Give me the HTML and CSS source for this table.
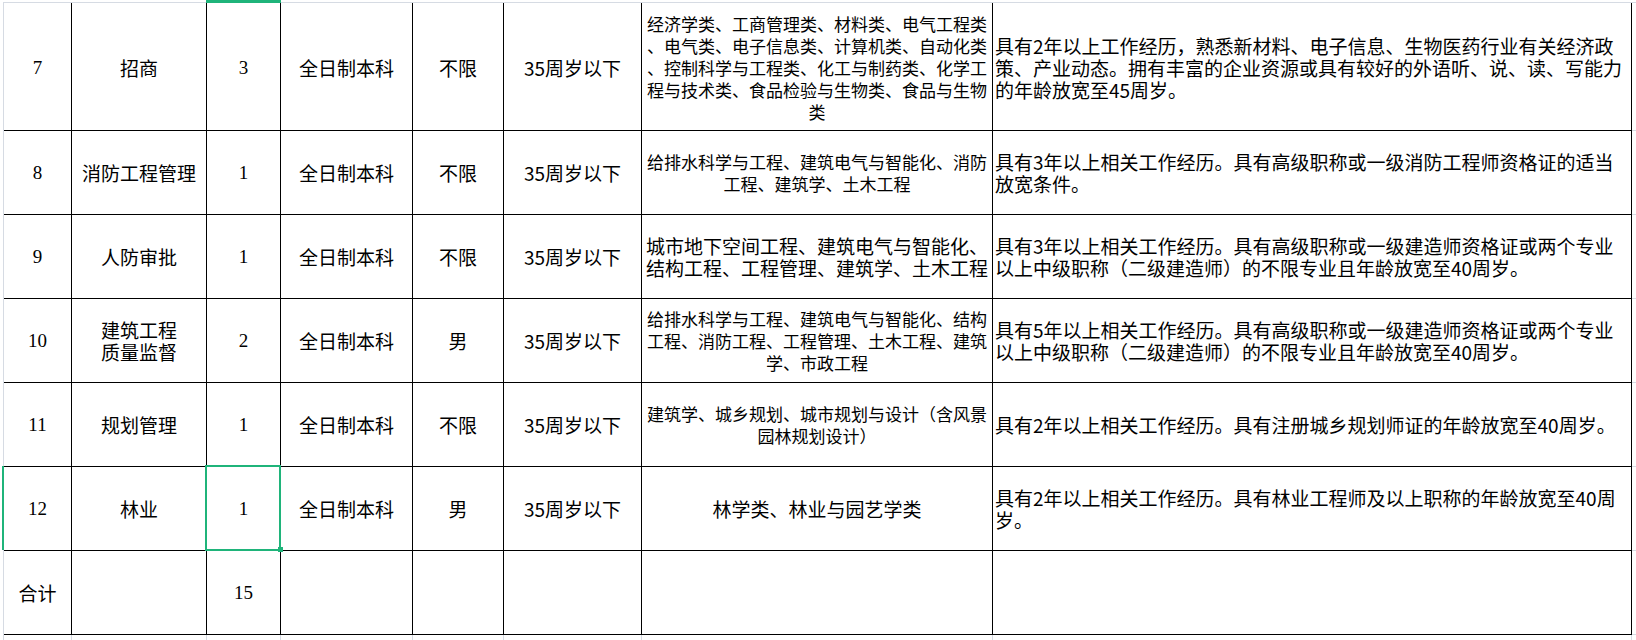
FILE: index.html
```html
<!DOCTYPE html>
<html lang="zh-CN">
<head>
<meta charset="utf-8">
<title>岗位表</title>
<link rel="stylesheet" href="styles.css">
</head>
<body>
<div class="sheet">
  <!-- row 7 -->
  <div class="cell num top">7</div>
  <div class="cell top">招商</div>
  <div class="cell num top colmark">3</div>
  <div class="cell top">全日制本科</div>
  <div class="cell top">不限</div>
  <div class="cell top">35周岁以下</div>
  <div class="cell majors top"><span>经济学类、工商管理类、材料类、电气工程类<br>、电气类、电子信息类、计算机类、自动化类<br>、控制科学与工程类、化工与制药类、化学工<br>程与技术类、食品检验与生物类、食品与生物<br>类</span></div>
  <div class="cell req top"><span>具有2年以上工作经历，熟悉新材料、电子信息、生物医药行业有关经济政<br>策、产业动态。拥有丰富的企业资源或具有较好的外语听、说、读、写能力<br>的年龄放宽至45周岁。</span></div>
  <div class="cell edge"></div>

  <!-- row 8 -->
  <div class="cell num">8</div>
  <div class="cell">消防工程管理</div>
  <div class="cell num">1</div>
  <div class="cell">全日制本科</div>
  <div class="cell">不限</div>
  <div class="cell">35周岁以下</div>
  <div class="cell majors"><span>给排水科学与工程、建筑电气与智能化、消防<br>工程、建筑学、土木工程</span></div>
  <div class="cell req"><span>具有3年以上相关工作经历。具有高级职称或一级消防工程师资格证的适当<br>放宽条件。</span></div>
  <div class="cell edge"></div>

  <!-- row 9 -->
  <div class="cell num">9</div>
  <div class="cell">人防审批</div>
  <div class="cell num">1</div>
  <div class="cell">全日制本科</div>
  <div class="cell">不限</div>
  <div class="cell">35周岁以下</div>
  <div class="cell majors large"><span>城市地下空间工程、建筑电气与智能化、<br>结构工程、工程管理、建筑学、土木工程</span></div>
  <div class="cell req"><span>具有3年以上相关工作经历。具有高级职称或一级建造师资格证或两个专业<br>以上中级职称（二级建造师）的不限专业且年龄放宽至40周岁。</span></div>
  <div class="cell edge"></div>

  <!-- row 10 -->
  <div class="cell num">10</div>
  <div class="cell"><span>建筑工程<br>质量监督</span></div>
  <div class="cell num">2</div>
  <div class="cell">全日制本科</div>
  <div class="cell">男</div>
  <div class="cell">35周岁以下</div>
  <div class="cell majors"><span>给排水科学与工程、建筑电气与智能化、结构<br>工程、消防工程、工程管理、土木工程、建筑<br>学、市政工程</span></div>
  <div class="cell req"><span>具有5年以上相关工作经历。具有高级职称或一级建造师资格证或两个专业<br>以上中级职称（二级建造师）的不限专业且年龄放宽至40周岁。</span></div>
  <div class="cell edge"></div>

  <!-- row 11 -->
  <div class="cell num">11</div>
  <div class="cell">规划管理</div>
  <div class="cell num">1</div>
  <div class="cell">全日制本科</div>
  <div class="cell">不限</div>
  <div class="cell">35周岁以下</div>
  <div class="cell majors"><span>建筑学、城乡规划、城市规划与设计（含风景<br>园林规划设计）</span></div>
  <div class="cell req"><span>具有2年以上相关工作经历。具有注册城乡规划师证的年龄放宽至40周岁。</span></div>
  <div class="cell edge"></div>

  <!-- row 12 -->
  <div class="cell num rowmark">12</div>
  <div class="cell">林业</div>
  <div class="cell num selected">1</div>
  <div class="cell">全日制本科</div>
  <div class="cell">男</div>
  <div class="cell">35周岁以下</div>
  <div class="cell majors large">林学类、林业与园艺学类</div>
  <div class="cell req"><span>具有2年以上相关工作经历。具有林业工程师及以上职称的年龄放宽至40周<br>岁。</span></div>
  <div class="cell edge"></div>

  <!-- total -->
  <div class="cell">合计</div>
  <div class="cell"></div>
  <div class="cell num">15</div>
  <div class="cell"></div>
  <div class="cell"></div>
  <div class="cell"></div>
  <div class="cell"></div>
  <div class="cell"></div>
  <div class="cell edge"></div>

  <!-- next (empty) spreadsheet row -->
  <div class="cell gap"></div>
  <div class="cell gap"></div>
  <div class="cell gap"></div>
  <div class="cell gap"></div>
  <div class="cell gap"></div>
  <div class="cell gap"></div>
  <div class="cell gap"></div>
  <div class="cell gap"></div>
  <div class="cell gap"></div>
</div>
</body>
</html>
```
FILE: styles.css
```css
html, body {
  margin: 0;
  padding: 0;
  overflow: hidden;
  background: #ffffff;
}

body {
  font-family: "Noto Sans CJK SC", sans-serif;
  font-size: 19px;
  color: #000000;
}

.sheet {
  margin: 2px 0 0 3px;
  border-top: 1px solid #d6dbe3;
  border-left: 1px solid #d6dbe3;
  display: grid;
  grid-template-columns: 68px 135px 74px 132px 91px 138px 351px 639px 4px;
  grid-template-rows: 128px repeat(6, 84px) 5px;
}

.cell {
  box-sizing: border-box;
  border-right: 1px solid #000000;
  border-bottom: 1px solid #000000;
  display: flex;
  align-items: center;
  justify-content: center;
  text-align: center;
  line-height: 22px;
  white-space: nowrap;
  position: relative;
}

.top {
  padding-top: 2px;
}

.num {
  font-family: "Liberation Serif", "Noto Sans CJK SC", serif;
}

.majors {
  font-size: 17px;
}

.majors.large {
  font-size: 19px;
}

.req {
  justify-content: flex-start;
  text-align: left;
  padding-left: 2px;
}

.edge {
  border-right: none;
  border-bottom: 1px solid #d6dbe3;
}

.gap {
  border-bottom: none;
  border-right: 1px solid #d6dbe3;
}

.gap:last-child {
  border-right: none;
}

/* selected cell outline + fill handle */
.selected::after {
  content: "";
  position: absolute;
  left: -2px;
  top: -2px;
  right: -1px;
  bottom: -1px;
  border: 2px solid #1fb47a;
  z-index: 2;
}

.selected::before {
  content: "";
  position: absolute;
  width: 5px;
  height: 5px;
  right: -3px;
  bottom: -2px;
  background: #1fb47a;
  z-index: 3;
}

/* column header highlight (selected column) */
.colmark::before {
  content: "";
  position: absolute;
  left: -1px;
  right: -1px;
  top: -3px;
  height: 3px;
  background: #1fb47a;
  z-index: 2;
}

/* row header highlight (selected row) */
.rowmark::before {
  content: "";
  position: absolute;
  left: -2px;
  width: 2px;
  top: -1px;
  bottom: 0;
  background: #1fb47a;
  z-index: 2;
}
```
